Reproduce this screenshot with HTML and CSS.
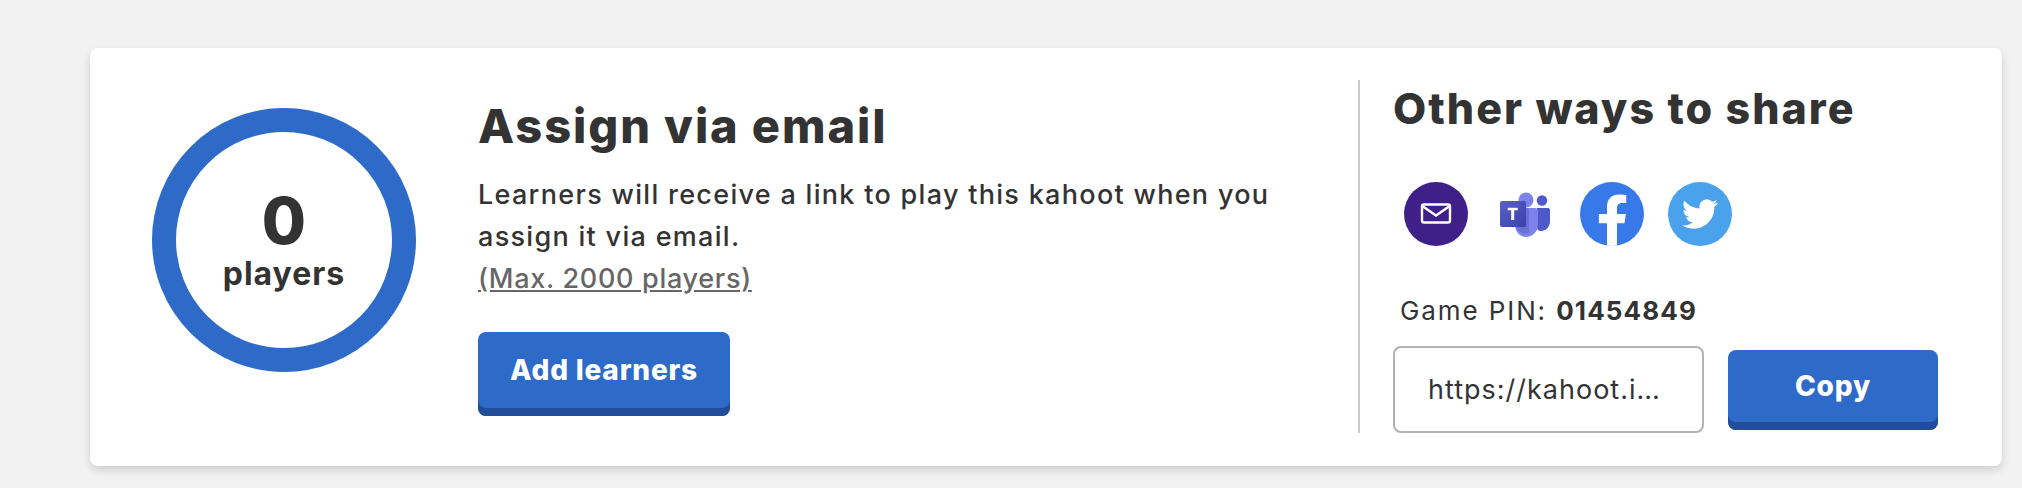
FILE: index.html
```html
<!DOCTYPE html>
<html lang="en">
<head>
<meta charset="utf-8">
<title>Assign via email</title>
<link rel="stylesheet" href="styles.css">
</head>
<body>
<section class="card">
  <div class="counter">
    <div class="ring">
      <span class="count">0</span>
      <span class="count-label">players</span>
    </div>
  </div>
  <div class="assign">
    <h2 class="title">Assign via email</h2>
    <p class="desc">Learners will receive a link to play this kahoot when you assign it via email.</p>
    <a class="max" href="#">(Max. 2000 players)</a>
    <button class="btn btn-add" type="button">Add learners</button>
  </div>
  <aside class="share">
    <h2 class="share-title">Other ways to share</h2>
    <div class="icons">
      <svg class="icon" viewBox="0 0 64 64" aria-label="Email">
        <circle cx="32" cy="32" r="32" fill="#3f2089"/>
        <rect x="18" y="22.500" width="28" height="18" rx="2" fill="none" stroke="#fff" stroke-width="2.400"/>
        <path d="M19 24.500 32 33.500 45 24.500" fill="none" stroke="#fff" stroke-width="2.400"/>
      </svg>
      <svg class="icon" viewBox="0 0 64 64" aria-label="Microsoft Teams">
        <defs>
          <linearGradient id="teams-tile" x1="0" y1="0" x2="1" y2="1">
            <stop offset="0" stop-color="#5a62c3"/>
            <stop offset="1" stop-color="#3940ab"/>
          </linearGradient>
        </defs>
        <circle cx="50" cy="18.500" r="5.200" fill="#5059c9"/>
        <path d="M45 26h11a2 2 0 0 1 2 2v11c0 6-4 10-9 10s-4-5-4-8z" fill="#5059c9"/>
        <circle cx="34" cy="18" r="7.500" fill="#7b83eb"/>
        <path d="M23 26h20a3 3 0 0 1 3 3v13c0 8-6 13-12 13s-11-5-11-13z" fill="#7b83eb"/>
        <path d="M23 26h12a2 2 0 0 1 2 2v22a1.500 1.500 0 0 1-1 1.500c-7 1-13-4-13-11z" fill="#4a4fa8" opacity=".35"/>
        <rect x="8" y="19" width="26" height="26" rx="2" fill="url(#teams-tile)"/>
        <path d="M15.700 25.700h10v2.600h-3.500v9.800h-3v-9.800h-3.500z" fill="#fff"/>
      </svg>
      <svg class="icon" viewBox="0 0 24 24" aria-label="Facebook">
        <circle cx="12" cy="12" r="12" fill="#3879ea"/>
        <path d="M16.671 15.469 17.203 12h-3.328V9.749c0-.949.465-1.874 1.956-1.874h1.513V4.922s-1.374-.234-2.686-.234c-2.741 0-4.533 1.661-4.533 4.668V12H7.078v3.469h3.047v8.385a12.090 12.090 0 0 0 3.750 0v-8.385z" fill="#fff"/>
      </svg>
      <svg class="icon" viewBox="0 0 64 64" aria-label="Twitter">
        <circle cx="32" cy="32" r="32" fill="#4aa1ec"/>
        <path transform="translate(14 14) scale(1.500)" fill="#fff" d="M23.953 4.570a10 10 0 0 1-2.825.775 4.958 4.958 0 0 0 2.163-2.723c-.951.555-2.005.959-3.127 1.184a4.920 4.920 0 0 0-8.384 4.482C7.690 8.095 4.067 6.130 1.640 3.162a4.822 4.822 0 0 0-.666 2.475c0 1.710.870 3.213 2.188 4.096a4.904 4.904 0 0 1-2.228-.616v.060a4.923 4.923 0 0 0 3.946 4.827 4.996 4.996 0 0 1-2.212.085 4.936 4.936 0 0 0 4.604 3.417 9.867 9.867 0 0 1-6.102 2.105c-.390 0-.779-.023-1.170-.067a13.995 13.995 0 0 0 7.557 2.209c9.053 0 13.998-7.496 13.998-13.985 0-.210 0-.420-.015-.630A9.935 9.935 0 0 0 24 4.590z"/>
      </svg>
    </div>
    <p class="pin">Game PIN: <strong>01454849</strong></p>
    <div class="link-row">
      <input class="link-box" type="text" readonly value="https://kahoot.it/challenge/01454849" aria-label="Share link">
      <button class="btn btn-copy" type="button">Copy</button>
    </div>
  </aside>
</section>
</body>
</html>
```

FILE: styles.css
```css
* { box-sizing: border-box; }

html, body { height: 100%; }

body {
  margin: 0;
  padding: 48px 20px 0 90px;
  background: #f2f2f2;
  font-family: "Inter", "Liberation Sans", sans-serif;
  color: #333;
  overflow: hidden;
}

.card {
  display: flex;
  width: 1912px;
  height: 418px;
  background: #fff;
  border-radius: 8px;
  box-shadow: 0 4px 8px rgba(0, 0, 0, .15);
}

.counter {
  flex: none;
  width: 388px;
  padding: 60px 0 0 62px;
}

.ring {
  display: flex;
  flex-direction: column;
  align-items: center;
  justify-content: center;
  width: 264px;
  height: 264px;
  border: 24px solid #2e6ac8;
  border-radius: 50%;
}

.count {
  font-size: 64px;
  line-height: 68px;
  font-weight: 800;
}

.count-label {
  font-size: 32px;
  line-height: 38px;
  font-weight: 700;
  letter-spacing: 1px;
}

.assign {
  flex: none;
  width: 880px;
  padding: 48px 60px 0 0;
}

.title {
  margin: 0;
  font-size: 47px;
  line-height: 60px;
  font-weight: 800;
  letter-spacing: 1.9px;
}

.desc {
  margin: 18px 0 0;
  width: 800px;
  font-size: 27px;
  line-height: 42px;
  font-weight: 500;
  letter-spacing: 1.3px;
}

.max {
  display: block;
  width: fit-content;
  font-size: 27px;
  line-height: 42px;
  font-weight: 500;
  letter-spacing: .7px;
  color: #666;
}

.btn {
  display: block;
  flex: none;
  border: 0;
  border-radius: 8px;
  background: #2e6ac8;
  box-shadow: inset 0 -8px 0 #224d98;
  color: #fff;
  font-family: inherit;
  font-weight: 800;
  font-size: 28px;
  letter-spacing: .8px;
  padding: 0 0 8px;
}

.btn-add {
  width: 252px;
  height: 84px;
  margin-top: 32px;
}

.share {
  flex: none;
  width: 644px;
  height: 353px;
  margin-top: 32px;
  padding-left: 33px;
  border-left: 2px solid #ccc;
}

.share-title {
  margin: 0;
  font-size: 43px;
  line-height: 56px;
  font-weight: 800;
  letter-spacing: 2px;
}

.icons {
  display: flex;
  gap: 24px;
  margin: 46px 0 0 11px;
}

.icon {
  flex: none;
  width: 64px;
  height: 64px;
}

.pin {
  margin: 48px 0 0 7px;
  font-size: 26px;
  line-height: 34px;
  font-weight: 400;
  letter-spacing: 1.9px;
}

.pin strong {
  font-weight: 700;
  letter-spacing: 1.1px;
}

.link-row {
  display: flex;
  align-items: center;
  gap: 24px;
  margin-top: 18px;
}

.link-box {
  flex: none;
  width: 311px;
  height: 87px;
  padding: 0 33px;
  border: 2px solid #b2b2b2;
  border-radius: 8px;
  outline: 0;
  background: #fff;
  color: #333;
  font-family: inherit;
  font-size: 27px;
  letter-spacing: 1px;
  text-overflow: ellipsis;
}

.btn-copy {
  width: 210px;
  height: 80px;
}
```
